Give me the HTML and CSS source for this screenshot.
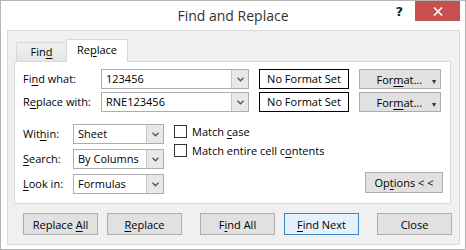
FILE: index.html
```html
<!DOCTYPE html>
<html>
<head>
    <meta charset="UTF-8">
    <title>Find and Replace</title>
    <link rel="stylesheet" href="styles.css">
</head>
<body>
    <div class="dialog">
        <div class="titlebar">
            <span></span>
            <div class="title">Find and Replace</div>
            <div class="controls">
                <span class="help">?</span>
                <span class="close-x">
                    <svg width="10" height="9" viewBox="0 0 10 9">
                        <path d="M1 0.5 L9 8.5 M9 0.5 L1 8.5" stroke="#fff" stroke-width="1.6" fill="none"/>
                    </svg>
                </span>
            </div>
        </div>

        <div class="client">
            <!-- Zakladki -->
            <div class="tabs">
                <div class="tab">Fin<u>d</u></div>
                <div class="tab active">Re<u>p</u>lace</div>
            </div>

            <div class="panel">
                <div class="find-grid">
                    <label class="lbl">Fi<u>n</u>d what:</label>
                    <div class="combo">
                        <span class="combo-text">123456</span>
                        <span class="combo-arrow"><svg width="7" height="5" viewBox="0 0 7 5"><path d="M0.5 0.8 L3.5 3.8 L6.5 0.8" stroke="#555" stroke-width="1.3" fill="none"/></svg></span>
                    </div>
                    <div class="nofmt">No Format Set</div>
                    <button class="btn fmt">For<u>m</u>at... <span class="caret">&#9662;</span></button>

                    <label class="lbl">R<u>e</u>place with:</label>
                    <div class="combo">
                        <span class="combo-text">RNE123456</span>
                        <span class="combo-arrow"><svg width="7" height="5" viewBox="0 0 7 5"><path d="M0.5 0.8 L3.5 3.8 L6.5 0.8" stroke="#555" stroke-width="1.3" fill="none"/></svg></span>
                    </div>
                    <div class="nofmt">No Format Set</div>
                    <button class="btn fmt">For<u>m</u>at... <span class="caret">&#9662;</span></button>
                </div>

                <div class="options">
                    <div class="selects">
                        <label class="lbl">Wit<u>h</u>in:</label>
                        <div class="combo">
                            <span class="combo-text">Sheet</span>
                            <span class="combo-arrow"><svg width="7" height="5" viewBox="0 0 7 5"><path d="M0.5 0.8 L3.5 3.8 L6.5 0.8" stroke="#555" stroke-width="1.3" fill="none"/></svg></span>
                        </div>
                        <label class="lbl"><u>S</u>earch:</label>
                        <div class="combo">
                            <span class="combo-text">By Columns</span>
                            <span class="combo-arrow"><svg width="7" height="5" viewBox="0 0 7 5"><path d="M0.5 0.8 L3.5 3.8 L6.5 0.8" stroke="#555" stroke-width="1.3" fill="none"/></svg></span>
                        </div>
                        <label class="lbl"><u>L</u>ook in:</label>
                        <div class="combo">
                            <span class="combo-text">Formulas</span>
                            <span class="combo-arrow"><svg width="7" height="5" viewBox="0 0 7 5"><path d="M0.5 0.8 L3.5 3.8 L6.5 0.8" stroke="#555" stroke-width="1.3" fill="none"/></svg></span>
                        </div>
                    </div>

                    <div class="checks">
                        <div class="check"><span class="box"></span><span>Match <u>c</u>ase</span></div>
                        <div class="check"><span class="box"></span><span>Match entire cell c<u>o</u>ntents</span></div>
                    </div>

                    <button class="btn opt">Op<u>t</u>ions &lt; &lt;</button>
                </div>
            </div>

            <div class="actions">
                <button class="btn act">Replace <u>A</u>ll</button>
                <button class="btn act gap-s"><u>R</u>eplace</button>
                <button class="btn act gap-l">F<u>i</u>nd All</button>
                <button class="btn act gap-s default"><u>F</u>ind Next</button>
                <button class="btn act gap-l">Close</button>
            </div>
        </div>
    </div>
</body>
</html>
```

FILE: styles.css
```css
* {
    box-sizing: border-box;
}

body {
    margin: 0;
    background: #fff;
    font-family: 'Open Sans', 'Noto Sans', sans-serif;
    font-size: 11px;
    color: #000;
}

u {
    text-underline-offset: 2px;
    text-decoration-thickness: 1px;
}

.dialog {
    width: 466px;
    height: 250px;
    border: 1px solid #b5b5b5;
    background: #fff;
    display: flex;
    flex-direction: column;
}

/* Pasek tytulu */
.titlebar {
    height: 29px;
    display: grid;
    grid-template-columns: 1fr auto 1fr;
}

.title {
    font-size: 14px;
    line-height: 30px;
    color: #333;
}

.controls {
    display: flex;
    justify-content: flex-end;
    align-items: flex-start;
    padding-right: 5px;
}

.help {
    font-family: 'DejaVu Sans', sans-serif;
    font-weight: bold;
    font-size: 13px;
    line-height: 22px;
    color: #222;
    margin-right: 12px;
}

.close-x {
    width: 45px;
    height: 20px;
    background: #c75050;
    display: flex;
    align-items: center;
    justify-content: center;
}

/* Obszar okna */
.client {
    flex: 1;
    margin: 0 5px 4px 6px;
    background: #f0f0f0;
    border: 1px solid #dadada;
    display: flex;
    flex-direction: column;
}

.tabs {
    display: flex;
    align-items: flex-end;
    margin-top: 7px;
    padding-left: 8px;
    height: 23px;
}

.tab {
    height: 19px;
    width: 51px;
    border: 1px solid #d9d9d9;
    border-bottom: none;
    background: linear-gradient(#f0f0f0, #e5e5e5);
    text-align: center;
    line-height: 18px;
}

.tab.active {
    height: 23px;
    width: 62px;
    margin-left: -1px;
    margin-bottom: -1px;
    background: #fff;
    line-height: 20px;
    position: relative;
}

.panel {
    margin: 0 8px 0 6px;
    height: 143px;
    background: #fff;
    border: 1px solid #d9d9d9;
    padding: 7px 7px 9px 8px;
}

.find-grid {
    display: grid;
    grid-template-columns: 68px 148px 90px 82px;
    grid-auto-rows: 20px;
    column-gap: 10px;
    row-gap: 3px;
}

.lbl {
    line-height: 20px;
    white-space: nowrap;
}

.combo {
    display: flex;
    border: 1px solid #abadb3;
    background: #fff;
    height: 20px;
}

.combo-text {
    flex: 1;
    padding-left: 4px;
    line-height: 18px;
    white-space: nowrap;
}

.combo-arrow {
    width: 17px;
    background: #e8e8e8;
    border-left: 1px solid #c5c5c5;
    display: flex;
    align-items: center;
    justify-content: center;
}

.nofmt {
    border: 1px solid #000;
    text-align: center;
    line-height: 18px;
    height: 20px;
    white-space: nowrap;
}

.btn {
    font-family: inherit;
    font-size: 11px;
    color: #000;
    background: #e1e1e1;
    border: 1px solid #adadad;
    padding: 0;
    white-space: nowrap;
}

.fmt {
    text-align: right;
    padding-right: 4px;
}

.caret {
    font-size: 8px;
    margin-left: 7px;
    color: #333;
}

.options {
    display: flex;
    align-items: flex-start;
    margin-top: 12px;
}

.selects {
    display: grid;
    grid-template-columns: 50px 91px;
    grid-auto-rows: 20px;
    row-gap: 5px;
}

.checks {
    display: flex;
    flex-direction: column;
    gap: 5px;
    margin-left: 10px;
    padding-top: 0;
}

.check {
    display: flex;
    align-items: center;
    height: 14px;
    white-space: nowrap;
}

.box {
    width: 13px;
    height: 13px;
    border: 1px solid #333;
    background: #fff;
    margin-right: 5px;
}

.opt {
    margin-left: auto;
    margin-top: 48px;
    width: 78px;
    height: 21px;
}

.actions {
    display: flex;
    margin-top: 9px;
    padding-left: 15px;
}

.act {
    width: 75px;
    height: 22px;
}

.gap-s {
    margin-left: 9px;
}

.gap-l {
    margin-left: 18px;
}

.default {
    background: #e5f1fb;
    border-color: #3c85c8;
}
```
